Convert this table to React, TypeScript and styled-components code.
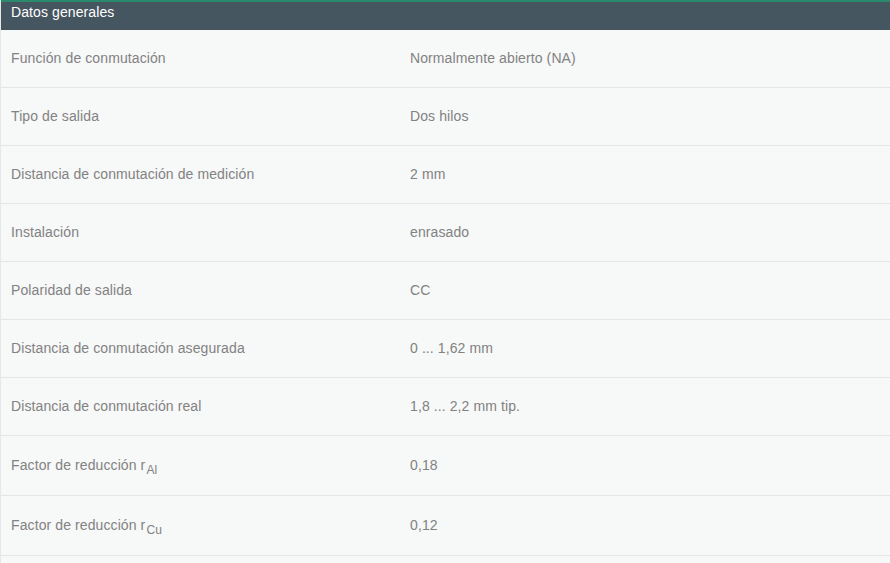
import React from "react";
import styled, { createGlobalStyle } from "styled-components";

const Global = createGlobalStyle`
  html, body { margin: 0; padding: 0; background: #ffffff; overflow: hidden; }
  body { font-family: "Liberation Sans", Arial, sans-serif; }
`;

const Panel = styled.section`
  width: 890px;
  border-left: 1px solid #e6e8e8;
  box-sizing: border-box;
  background: #f7f8f8;
`;

const Header = styled.div`
  height: 30px;
  box-sizing: border-box;
  border-top: 2px solid #2b8a6c;
  background: #455661;
  color: #ffffff;
  font-size: 14px;
  line-height: 18px;
  padding: 1px 10px 0;
  letter-spacing: 0.1px;
`;

const Row = styled.div<{ $tall?: boolean }>`
  display: grid;
  grid-template-columns: 409px 1fr;
  align-items: center;
  min-height: ${(p) => (p.$tall ? 59 : 57)}px;
  border-bottom: 1px solid #e4e6e6;
  color: #828282;
  font-size: 14px;
  line-height: 17px;
  letter-spacing: 0.1px;
`;

const Label = styled.div`
  padding-left: 10px;
`;

const Value = styled.div``;

const Sub = styled.sub`
  font-size: 12px;
  vertical-align: -4px;
  line-height: 0;
  margin-left: 1px;
`;

const rows: { label: React.ReactNode; value: string; tall?: boolean }[] = [
  { label: "Función de conmutación", value: "Normalmente abierto (NA)" },
  { label: "Tipo de salida", value: "Dos hilos" },
  { label: "Distancia de conmutación de medición", value: "2 mm" },
  { label: "Instalación", value: "enrasado" },
  { label: "Polaridad de salida", value: "CC" },
  { label: "Distancia de conmutación asegurada", value: "0 ... 1,62 mm" },
  { label: "Distancia de conmutación real", value: "1,8 ... 2,2 mm tip." },
  {
    label: (
      <>
        Factor de reducción r<Sub>Al</Sub>
      </>
    ),
    value: "0,18",
    tall: true,
  },
  {
    label: (
      <>
        Factor de reducción r<Sub>Cu</Sub>
      </>
    ),
    value: "0,12",
    tall: true,
  },
];

export default function App() {
  return (
    <>
      <Global />
      <Panel>
        <Header>Datos generales</Header>
        {rows.map((r, i) => (
          <Row key={i} $tall={r.tall}>
            <Label>{r.label}</Label>
            <Value>{r.value}</Value>
          </Row>
        ))}
        <Row />
      </Panel>
    </>
  );
}
